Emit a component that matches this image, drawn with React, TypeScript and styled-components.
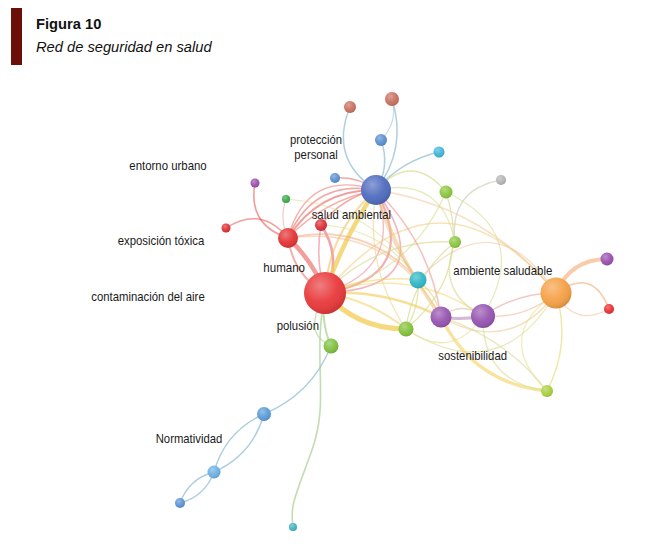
import React from "react";
import styled, { createGlobalStyle } from "styled-components";

const Global = createGlobalStyle`
  html, body { margin: 0; padding: 0; background: #ffffff; }
  body { font-family: "Liberation Sans", Arial, sans-serif; }
`;

const Page = styled.div`
  width: 647px;
  height: 560px;
  background: #fff;
  display: flex;
  flex-direction: column;
  overflow: hidden;
`;

const Header = styled.header`
  display: flex;
  align-items: flex-start;
  height: 65px;
  padding: 8px 0 0 11px;
  box-sizing: border-box;
`;

const Bar = styled.div`
  width: 11px;
  height: 57px;
  background: #6b1008;
  flex-shrink: 0;
`;

const TitleBlock = styled.div`
  margin-left: 14px;
  padding-top: 5.4px;
  font-family: "Liberation Sans", Arial, sans-serif;
  font-size: 14.7px;
  line-height: 23px;
  color: #111;
`;

const FigNum = styled.div`
  font-weight: bold;
`;

const FigTitle = styled.div`
  font-style: italic;
`;

const Graph = styled.svg`
  display: block;
  width: 647px;
  height: 495px;
`;

const Label = styled.text`
  font-family: "Liberation Sans", Arial, sans-serif;
  font-size: 13.6px;
  fill: #1a1a1a;
`;

type N = { x: number; y: number; r: number; c: string };
const nodes: Record<string, N> = {
  pol: { x: 325, y: 293, r: 21, c: "#e8383a" },
  hum: { x: 288, y: 238, r: 10, c: "#e33234" },
  rs: { x: 321, y: 225, r: 6, c: "#dc2f3a" },
  sa: { x: 376, y: 190, r: 15, c: "#4f6bbf" },
  rl: { x: 226, y: 228, r: 4.5, c: "#e03030" },
  pu1: { x: 255, y: 183, r: 4.5, c: "#9b4fb0" },
  g1: { x: 286, y: 199, r: 4, c: "#3aaa48" },
  b1: { x: 335, y: 178, r: 5, c: "#5a90d0" },
  b2: { x: 381, y: 140, r: 6, c: "#5a90d0" },
  br1: { x: 350, y: 107, r: 6, c: "#c87060" },
  br2: { x: 392, y: 99, r: 7, c: "#c87060" },
  cy: { x: 439, y: 152, r: 5.5, c: "#40b4d8" },
  g2: { x: 446, y: 192, r: 6.5, c: "#8cc63e" },
  gr: { x: 501, y: 180, r: 5, c: "#b4b4b4" },
  g3: { x: 455, y: 242, r: 6, c: "#8cc63e" },
  tl: { x: 418, y: 280, r: 8.5, c: "#30b6c6" },
  g4: { x: 406, y: 329, r: 7.5, c: "#84c23a" },
  pu2: { x: 441, y: 317, r: 10.5, c: "#9654b0" },
  pu3: { x: 483, y: 316, r: 12, c: "#9654b0" },
  or: { x: 556, y: 293, r: 15.5, c: "#f5a045" },
  pu4: { x: 607, y: 259, r: 6.5, c: "#9a4fb0" },
  r2: { x: 609, y: 309, r: 5, c: "#e83030" },
  g5: { x: 547, y: 391, r: 6, c: "#a8d040" },
  g6: { x: 331, y: 346, r: 7.5, c: "#80c040" },
  b3: { x: 264, y: 414, r: 7, c: "#5b9bd8" },
  b4: { x: 214, y: 472, r: 6.5, c: "#6cb0e4" },
  b5: { x: 180, y: 503, r: 5, c: "#5a94d4" },
  tl2: { x: 293, y: 527, r: 4, c: "#40b4c0" },
};

// [from, to, bend, color, width, opacity]
type E = [string, string, number, string, number, number];
const RED = "#e8504a";
const PINK = "#e86a7a";
const YEL = "#f2cc50";
const LYG = "#d8dc90";
const BLU = "#9cc4d8";
const edges: E[] = [
  ["sa", "b2", 6, BLU, 1.5, 0.8],
  ["sa", "br1", -18, BLU, 1.5, 0.8],
  ["sa", "br2", 12, BLU, 1.5, 0.8],
  ["b2", "br2", 6, BLU, 1.2, 0.6],
  ["sa", "cy", -6, BLU, 1.5, 0.8],
  ["sa", "b1", 4, PINK, 1.4, 0.6],
  ["hum", "sa", -14, RED, 2.2, 0.55],
  ["hum", "sa", -20, RED, 1.6, 0.5],
  ["hum", "sa", -26, RED, 1.4, 0.45],
  ["hum", "sa", -8, RED, 1.4, 0.45],
  ["pol", "sa", 40, PINK, 2.2, 0.55],
  ["pol", "sa", 52, PINK, 1.6, 0.5],
  ["pol", "sa", 30, PINK, 1.4, 0.45],
  ["pol", "rs", 10, PINK, 2.6, 0.6],
  ["pol", "rs", -4, PINK, 1.6, 0.5],
  ["sa", "rs", 6, RED, 1.5, 0.5],
  ["pol", "sa", -4, YEL, 4.5, 0.75],
  ["pol", "sa", -12, "#f5b640", 2, 0.5],
  ["pol", "hum", 4, RED, 4.5, 0.55],
  ["pol", "hum", -8, RED, 2, 0.45],
  ["hum", "rl", 14, RED, 1.6, 0.55],
  ["hum", "pu1", -14, RED, 1.6, 0.55],
  ["hum", "g1", -4, "#e89898", 1.2, 0.5],
  ["hum", "tl", -20, "#f0a070", 1.6, 0.5],
  ["hum", "pu2", -30, "#f0b080", 1.4, 0.45],
  ["g1", "tl", -20, LYG, 1.2, 0.6],
  ["rs", "tl", -14, LYG, 1.2, 0.6],
  ["pol", "g4", 10, YEL, 5, 0.75],
  ["pol", "g4", -6, YEL, 2, 0.5],
  ["pol", "pu2", -8, YEL, 2.6, 0.6],
  ["pol", "tl", -6, YEL, 1.6, 0.5],
  ["pol", "g3", -16, LYG, 1.5, 0.65],
  ["pol", "pu3", -20, YEL, 1.6, 0.45],
  ["pol", "or", -70, "#f0c060", 1.6, 0.45],
  ["pol", "g6", 4, "#a8d090", 2, 0.7],
  ["pol", "g2", 20, LYG, 1.3, 0.6],
  ["sa", "g2", -20, LYG, 1.4, 0.7],
  ["sa", "pu2", -12, "#ec9090", 1.6, 0.55],
  ["sa", "pu2", 6, "#f0c070", 3, 0.55],
  ["sa", "or", -20, "#f3c08a", 1.4, 0.5],
  ["sa", "g3", -24, LYG, 1.3, 0.6],
  ["sa", "g4", 14, "#f0d080", 1.3, 0.55],
  ["sa", "tl", 6, "#f0b0a0", 1.3, 0.5],
  ["g2", "g4", -24, LYG, 1.3, 0.7],
  ["g2", "pu3", -36, LYG, 1.3, 0.6],
  ["gr", "g3", 18, "#d0d8c0", 1.3, 0.8],
  ["g3", "pu3", 18, LYG, 1.3, 0.7],
  ["g3", "g4", 10, LYG, 1.3, 0.7],
  ["tl", "g4", -4, LYG, 1.3, 0.7],
  ["tl", "pu2", -4, LYG, 1.3, 0.7],
  ["tl", "or", -44, "#eec8a8", 1.3, 0.6],
  ["g4", "or", 40, LYG, 1.3, 0.6],
  ["pu2", "pu3", 2, "#c8a8c8", 3, 0.8],
  ["pu2", "pu3", -8, "#d8c0a0", 1.4, 0.6],
  ["pu2", "g5", 18, YEL, 3.4, 0.55],
  ["pu2", "g5", -10, LYG, 1.4, 0.6],
  ["pu3", "or", -6, "#e8a0a0", 1.5, 0.6],
  ["pu3", "or", 8, "#f0b090", 1.3, 0.55],
  ["pu2", "or", 26, "#f0c080", 1.4, 0.5],
  ["or", "pu4", -10, "#f5a060", 4, 0.55],
  ["or", "r2", -18, "#f0a870", 1.5, 0.6],
  ["or", "r2", 14, "#f0b888", 1.3, 0.5],
  ["or", "g5", -10, "#e8e080", 1.5, 0.7],
  ["or", "g5", 30, "#e8e090", 1.3, 0.6],
  ["pu3", "g5", 22, LYG, 1.3, 0.6],
  ["g4", "pu3", 20, "#e8dc90", 1.3, 0.6],
  ["g6", "b3", -10, BLU, 1.4, 0.85],
  ["b3", "b4", -9, BLU, 1.4, 0.85],
  ["b3", "b4", 9, BLU, 1.4, 0.85],
  ["b4", "b5", -6, BLU, 1.3, 0.85],
  ["b4", "b5", 6, BLU, 1.3, 0.85],
];

function curve(a: N, b: N, bend: number) {
  const mx = (a.x + b.x) / 2;
  const my = (a.y + b.y) / 2;
  const dx = b.x - a.x;
  const dy = b.y - a.y;
  const len = Math.hypot(dx, dy) || 1;
  const px = -dy / len;
  const py = dx / len;
  const cx = mx + px * bend * 2;
  const cy = my + py * bend * 2;
  return `M${a.x} ${a.y} Q${cx} ${cy} ${b.x} ${b.y}`;
}

// [text, x, baseline, width]
const labels: [string, number, number, number][] = [
  ["protección", 290, 143.5, 52],
  ["personal", 294.3, 158.5, 43.4],
  ["entorno urbano", 129.3, 170, 77.4],
  ["salud ambiental", 311.7, 219, 79.3],
  ["exposición tóxica", 117.7, 244.5, 86.6],
  ["humano", 263.3, 272, 41.7],
  ["contaminación del aire", 91.3, 301.3, 113.4],
  ["polusión", 276.7, 329.5, 42.3],
  ["ambiente saludable", 453.3, 274.5, 99],
  ["sostenibilidad", 438.3, 359.5, 68.7],
  ["Normatividad", 155.7, 443.3, 66.6],
];

export default function App() {
  return (
    <Page>
      <Global />
      <Header>
        <Bar />
        <TitleBlock>
          <FigNum>Figura 10</FigNum>
          <FigTitle>Red de seguridad en salud</FigTitle>
        </TitleBlock>
      </Header>
      <Graph viewBox="0 65 647 495">
        <defs>
          <radialGradient id="shine" cx="38%" cy="32%" r="70%">
            <stop offset="0%" stopColor="#ffffff" stopOpacity="0.35" />
            <stop offset="60%" stopColor="#ffffff" stopOpacity="0.05" />
            <stop offset="100%" stopColor="#000000" stopOpacity="0.12" />
          </radialGradient>
        </defs>
        <g fill="none" strokeLinecap="round">
          {edges.map(([f, t, bend, c, w, o], i) => (
            <path
              key={i}
              d={curve(nodes[f], nodes[t], bend)}
              stroke={c}
              strokeWidth={w}
              strokeOpacity={o}
            />
          ))}
          <path
            d="M325 293 C 312 360, 330 400, 312 450 S 290 505, 293 527"
            stroke="#b0d098"
            strokeWidth={1.6}
            strokeOpacity={0.75}
          />
          <path
            d="M325 293 C 305 330, 318 340, 331 346"
            stroke="#a8d090"
            strokeWidth={1.4}
            strokeOpacity={0.6}
          />
        </g>
        <g>
          {Object.entries(nodes).map(([k, n]) => (
            <g key={k}>
              <circle cx={n.x} cy={n.y} r={n.r} fill={n.c} />
              <circle cx={n.x} cy={n.y} r={n.r} fill="url(#shine)" />
            </g>
          ))}
        </g>
        <g>
          {labels.map(([t, x, y, w]) => (
            <Label
              key={t}
              x={x}
              y={y}
              textLength={w}
              lengthAdjust="spacingAndGlyphs"
            >
              {t}
            </Label>
          ))}
        </g>
      </Graph>
    </Page>
  );
}
